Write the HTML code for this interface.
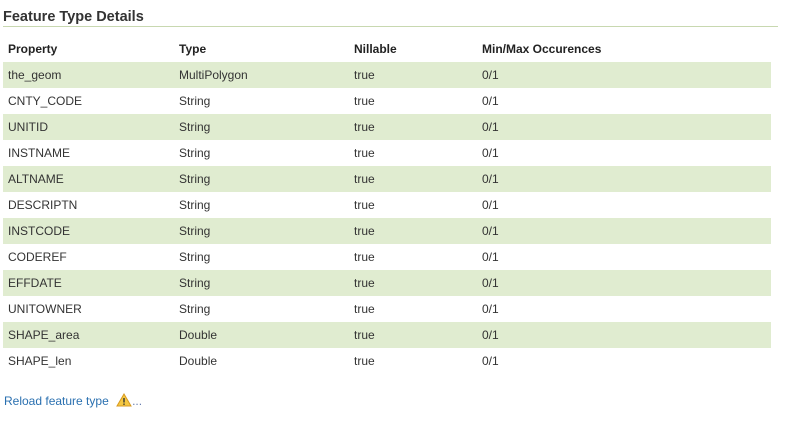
<!DOCTYPE html>
<html><head><style>
body{margin:0;background:#fff;font-family:"Liberation Sans",sans-serif;font-size:12px;color:#333;width:790px;height:429px;overflow:hidden;position:relative}
h3{position:absolute;left:3px;top:9px;margin:0;font-size:14.5px;font-weight:bold;color:#333;}
.line{position:absolute;left:3px;top:26px;width:775px;height:1px;background:#c8d8b0}
table{position:absolute;left:3px;top:36px;width:768px;border-collapse:collapse}
td,th{padding:0 0 0 5px;height:26px;text-align:left;white-space:nowrap}
th{font-weight:bold;color:#222}
tr.o td{background:#e0ecd0}
.c1{width:166px}.c2{width:170px}.c3{width:123px}
.link{position:absolute;left:4px;top:393px;color:#2a70b0;}
</style></head><body>
<h3>Feature Type Details</h3>
<div class="line"></div>
<table>
<tr><th class="c1">Property</th><th class="c2">Type</th><th class="c3">Nillable</th><th>Min/Max Occurences</th></tr>
<tr class="o"><td>the_geom</td><td>MultiPolygon</td><td>true</td><td>0/1</td></tr>
<tr><td>CNTY_CODE</td><td>String</td><td>true</td><td>0/1</td></tr>
<tr class="o"><td>UNITID</td><td>String</td><td>true</td><td>0/1</td></tr>
<tr><td>INSTNAME</td><td>String</td><td>true</td><td>0/1</td></tr>
<tr class="o"><td>ALTNAME</td><td>String</td><td>true</td><td>0/1</td></tr>
<tr><td>DESCRIPTN</td><td>String</td><td>true</td><td>0/1</td></tr>
<tr class="o"><td>INSTCODE</td><td>String</td><td>true</td><td>0/1</td></tr>
<tr><td>CODEREF</td><td>String</td><td>true</td><td>0/1</td></tr>
<tr class="o"><td>EFFDATE</td><td>String</td><td>true</td><td>0/1</td></tr>
<tr><td>UNITOWNER</td><td>String</td><td>true</td><td>0/1</td></tr>
<tr class="o"><td>SHAPE_area</td><td>Double</td><td>true</td><td>0/1</td></tr>
<tr><td>SHAPE_len</td><td>Double</td><td>true</td><td>0/1</td></tr>
</table>
<div class="link">Reload feature type <svg width="16" height="14" viewBox="0 0 16 14" style="vertical-align:-2px;margin-left:4px"><path d="M8 1 L15 13 L1 13 Z" fill="#f5c842" stroke="#d89a20" stroke-width="1"/><rect x="7.3" y="5" width="1.4" height="4.5" fill="#333"/><rect x="7.3" y="10.5" width="1.4" height="1.4" fill="#333"/></svg><span style="color:#6a7fb0">...</span></div>
</body></html>
